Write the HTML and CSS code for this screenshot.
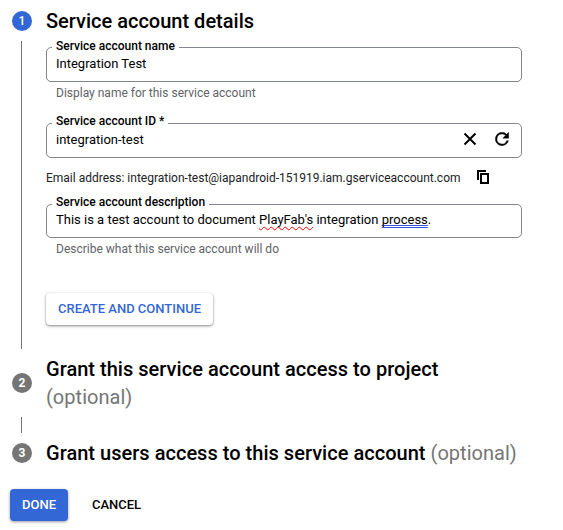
FILE: index.html
```html
<!DOCTYPE html>
<html lang="en">
<head>
<meta charset="utf-8">
<title>Create service account</title>
<link rel="stylesheet" href="styles.css">
</head>
<body>
<main class="stepper">
  <section class="step step-details">
    <div class="rail"><span class="badge badge-active">1</span><span class="line"></span></div>
    <div class="content">
      <h2 class="title title-details">Service account details</h2>
      <fieldset class="field">
        <legend><span class="label label-name">Service account name</span></legend>
        <div class="value"><span class="value-name">Integration Test</span></div>
      </fieldset>
      <p class="hint hint-name">Display name for this service account</p>
      <fieldset class="field field-id">
        <legend><span class="label label-id">Service account ID *</span></legend>
        <div class="value"><span class="value-id">integration-test</span></div>
        <div class="actions">
          <svg class="icon" viewBox="0 0 20 20"><path d="M4.5 4.5l11 11M15.5 4.5l-11 11" fill="none" stroke="#000" stroke-width="2"/></svg>
          <svg class="icon" viewBox="0 0 24 24"><path d="M17.65 6.35A7.96 7.96 0 0 0 12 4a8 8 0 1 0 7.73 10h-2.08A6 6 0 1 1 12 6c1.66 0 3.14.69 4.22 1.78L13 11h7V4z" stroke="#000" stroke-width=".5"/></svg>
        </div>
      </fieldset>
      <div class="email">
        <span class="email-text">Email address: integration-test@iapandroid-151919.iam.gserviceaccount.com</span>
        <svg class="copy" viewBox="0 0 14 16"><path d="M1 10V1h8" fill="none" stroke="#000" stroke-width="2"/><path d="M4 4h7v9H4z" fill="none" stroke="#000" stroke-width="2"/></svg>
      </div>
      <fieldset class="field field-desc">
        <legend><span class="label label-desc">Service account description</span></legend>
        <div class="value"><span class="value-desc">This is a test account to document <span class="spelling">PlayFab's</span> integration <span class="grammar">process</span>.</span></div>
      </fieldset>
      <p class="hint hint-desc">Describe what this service account will do</p>
      <button class="button button-raised">CREATE AND CONTINUE</button>
    </div>
  </section>
  <section class="step step-project">
    <div class="rail"><span class="badge">2</span><span class="line"></span></div>
    <h2 class="title title-project">Grant this service account access to project <span class="optional">(optional)</span></h2>
  </section>
  <section class="step step-users">
    <div class="rail"><span class="badge">3</span></div>
    <h2 class="title title-users">Grant users access to this service account <span class="optional">(optional)</span></h2>
  </section>
  <footer class="footer">
    <button class="button button-primary">DONE</button>
    <button class="button button-flat">CANCEL</button>
  </footer>
</main>
</body>
</html>
```
FILE: styles.css
```css
* { box-sizing: border-box; }
body {
  margin: 0;
  background: #fff;
  color: #000;
  font-family: Roboto, "Liberation Sans", sans-serif;
  font-size: 13px;
  line-height: 16px;
}
.stepper { display: flow-root; width: 563px; height: 530px; }
.step { display: flex; gap: 14px; padding-left: 12px; }
.step-details { height: 349px; padding-top: 7px; }
.step-project { height: 84px; padding-top: 6px; }
.step-users { height: 40px; padding-top: 6px; }
.rail { display: flex; flex-direction: column; align-items: flex-start; width: 20px; padding-top: 4px; }
.step-project .rail { padding-top: 18px; }
.badge {
  flex: none;
  width: 20px;
  height: 20px;
  border-radius: 50%;
  background: #757575;
  color: #fff;
  font-size: 12px;
  font-weight: 700;
  line-height: 20px;
  text-align: center;
}
.badge-active { background: #3367d6; font-weight: 500; }
.line { flex: 1; width: 1px; margin: 10px 0 0 9px; background: #757575; }
.step-project .line { margin-top: 24px; }
.content { width: 476px; }
.title { margin: 0; font-size: 20px; font-weight: 500; line-height: 28px; white-space: nowrap; }
.title-project, .title-users { letter-spacing: .025px; }
.title-project { width: 476px; white-space: normal; }
.title-project .optional { display: block; }
.optional { color: #757575; font-weight: 400; }
.field {
  display: flex;
  justify-content: space-between;
  min-width: 0;
  height: 41px;
  margin: 6px 0 0;
  padding: 0 9px;
  border: 1px solid #80868b;
  border-radius: 5px;
}
legend { height: 13px; margin-left: -4px; padding: 0 4px; font-size: 12px; font-weight: 500; line-height: 11px; }
.label { display: block; white-space: nowrap; }
.label-id, .label-desc { margin-top: -1px; }
.value { padding-top: 2px; white-space: nowrap; }
.hint { margin: 3px 0 0 10px; color: #5f6368; font-size: 12px; white-space: nowrap; }
.field-id { margin-top: 16px; }
.actions { display: flex; gap: 12px; margin-top: -1px; }
.icon { width: 20px; height: 20px; }
.email { display: flex; align-items: center; gap: 16px; height: 16px; margin-top: 12px; color: #202124; font-size: 12px; white-space: nowrap; }
.copy { width: 14px; height: 16px; }
.field-desc { height: 40px; margin-top: 12px; }
.field-desc .value { padding-top: 1px; }
.spelling { text-decoration: underline wavy #f00 1px; text-underline-offset: 2px; text-decoration-skip-ink: none; }
.grammar { text-decoration: underline double #3355df 1px; text-underline-offset: 1px; text-decoration-skip-ink: none; }
.button {
  height: 32px;
  padding: 0;
  border: 0;
  border-radius: 4px;
  background: none;
  color: #000;
  font: 500 13px/32px Roboto, "Liberation Sans", sans-serif;
  white-space: nowrap;
}
.button-raised {
  width: 167px;
  margin-top: 36px;
  background: #fff;
  color: #3367d6;
  box-shadow: 0 1px 3px rgba(0, 0, 0, .35), 0 1px 2px rgba(0, 0, 0, .18);
}
.button-primary { width: 58px; background: #3367d6; color: #fff; box-shadow: 0 1px 3px rgba(0, 0, 0, .4); }
.button-flat { width: 73px; }
.footer { display: flex; gap: 12px; padding: 16px 0 0 10px; }
```
